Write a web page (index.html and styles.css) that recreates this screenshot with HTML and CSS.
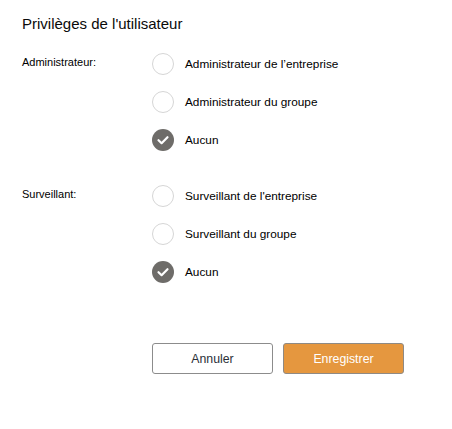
FILE: index.html
```html
<!DOCTYPE html>
<html lang="fr">
<head>
<meta charset="utf-8">
<link rel="stylesheet" href="styles.css">
</head>
<body>
<div class="page">
  <h1 class="title">Privilèges de l'utilisateur</h1>
  <div class="group">
    <div class="label">Administrateur:</div>
    <div class="options">
      <div class="option"><span class="radio"></span><span class="text">Administrateur de l’entreprise</span></div>
      <div class="option"><span class="radio"></span><span class="text">Administrateur du groupe</span></div>
      <div class="option"><span class="radio checked"><svg viewBox="0 0 22 22" width="22" height="22"><path d="M6.5 11.2 L9.6 14.2 L15.5 8.2" fill="none" stroke="#fff" stroke-width="2.2" stroke-linecap="round" stroke-linejoin="round"/></svg></span><span class="text">Aucun</span></div>
    </div>
  </div>
  <div class="group group2">
    <div class="label">Surveillant:</div>
    <div class="options">
      <div class="option"><span class="radio"></span><span class="text">Surveillant de l'entreprise</span></div>
      <div class="option"><span class="radio"></span><span class="text">Surveillant du groupe</span></div>
      <div class="option"><span class="radio checked"><svg viewBox="0 0 22 22" width="22" height="22"><path d="M6.5 11.2 L9.6 14.2 L15.5 8.2" fill="none" stroke="#fff" stroke-width="2.2" stroke-linecap="round" stroke-linejoin="round"/></svg></span><span class="text">Aucun</span></div>
    </div>
  </div>
  <div class="actions">
    <button class="btn btn-cancel">Annuler</button>
    <button class="btn btn-save">Enregistrer</button>
  </div>
</div>
</body>
</html>
```

FILE: styles.css
```css
html, body {
  margin: 0;
  padding: 0;
  background: #fff;
}
body {
  font-family: "Liberation Sans", Arial, sans-serif;
  color: #000;
}
.page {
  padding: 14px 0 0 22px;
}
.title {
  margin: 0;
  font-size: 15px;
  line-height: 20px;
  font-weight: normal;
  color: #0a0a0a;
}
.group {
  display: grid;
  grid-template-columns: 130px 1fr;
  margin-top: 19px;
}
.group2 {
  margin-top: 34px;
}
.label {
  font-size: 11px;
  line-height: 14px;
  padding-top: 2px;
}
.options {
  display: flex;
  flex-direction: column;
  gap: 16px;
}
.option {
  display: flex;
  align-items: center;
  height: 22px;
}
.radio {
  box-sizing: border-box;
  width: 22px;
  height: 22px;
  border-radius: 50%;
  border: 1px solid #d6d6d6;
  flex: none;
  display: block;
}
.radio.checked {
  border: none;
  background: #6e6c69;
}
.radio svg {
  display: block;
}
.text {
  margin-left: 11px;
  font-size: 11.8px;
  line-height: 14px;
}
.actions {
  display: flex;
  gap: 10px;
  margin: 60px 0 0 130px;
}
.btn {
  box-sizing: border-box;
  width: 121px;
  height: 31px;
  border-radius: 3px;
  font-family: "Liberation Sans", Arial, sans-serif;
  font-size: 12.3px;
  padding: 0;
}
.btn-cancel {
  background: #fff;
  border: 1px solid #8c8c8c;
  color: #2b2f38;
}
.btn-save {
  background: #e5973f;
  border: 1px solid #8f8a84;
  color: #fff;
}
```
